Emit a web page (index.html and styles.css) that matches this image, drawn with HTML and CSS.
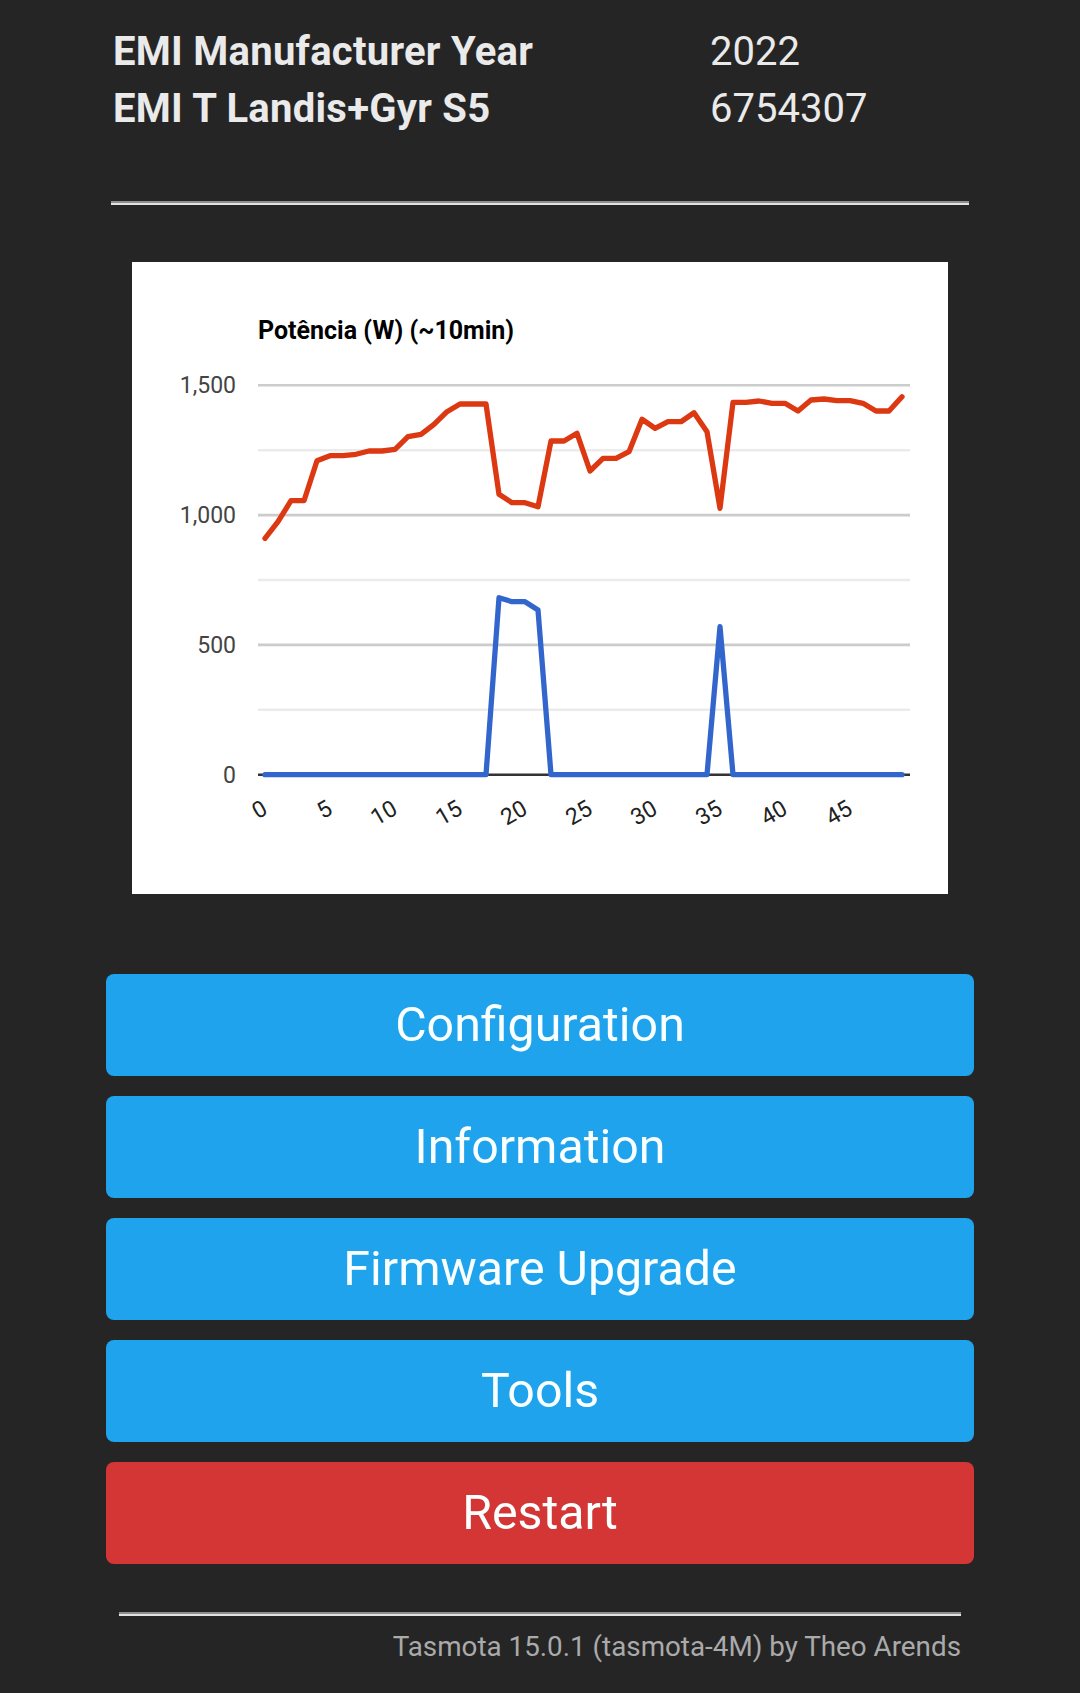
FILE: index.html
```html
<!DOCTYPE html>
<html lang="en">
<head>
<meta charset="utf-8">
<title>Tasmota</title>
<link rel="stylesheet" href="styles.css">
</head>
<body>
<div class="page">
  <div class="sensors">
    <div class="name">EMI Manufacturer Year</div><div class="val">2022</div>
    <div class="name">EMI T Landis+Gyr S5</div><div class="val">6754307</div>
  </div>
  <hr class="rule">
  <div class="chart">
    <svg width="816" height="632" viewBox="0 0 816 632" xmlns="http://www.w3.org/2000/svg">
      <text class="title" x="126" y="77">Potência (W) (~10min)</text>
      <g class="minor">
        <line x1="126" x2="778" y1="188.2" y2="188.2"/>
        <line x1="126" x2="778" y1="318" y2="318"/>
        <line x1="126" x2="778" y1="447.8" y2="447.8"/>
      </g>
      <g class="major">
        <line x1="126" x2="778" y1="123.3" y2="123.3"/>
        <line x1="126" x2="778" y1="253.1" y2="253.1"/>
        <line x1="126" x2="778" y1="382.9" y2="382.9"/>
      </g>
      <line class="base" x1="126" x2="778" y1="512.7" y2="512.7"/>
      <g class="ylab">
        <text x="104" y="131.3">1,500</text>
        <text x="104" y="261.1">1,000</text>
        <text x="104" y="390.9">500</text>
        <text x="104" y="520.7">0</text>
      </g>
      <g class="xlab">
        <text x="137" y="551" transform="rotate(-30 137 551)">0</text>
        <text x="202" y="551" transform="rotate(-30 202 551)">5</text>
        <text x="267" y="551" transform="rotate(-30 267 551)">10</text>
        <text x="332" y="551" transform="rotate(-30 332 551)">15</text>
        <text x="397" y="551" transform="rotate(-30 397 551)">20</text>
        <text x="462" y="551" transform="rotate(-30 462 551)">25</text>
        <text x="527" y="551" transform="rotate(-30 527 551)">30</text>
        <text x="592" y="551" transform="rotate(-30 592 551)">35</text>
        <text x="657" y="551" transform="rotate(-30 657 551)">40</text>
        <text x="722" y="551" transform="rotate(-30 722 551)">45</text>
      </g>
      <polyline class="s-red" points="133,276.3 146,259.7 159,238.7 172,238.7 185,198.7 198,193.7 211,193.7 224,192.3 237,189 250,189 263,187.3 276,174.7 289,172.3 302,162.3 315,149.7 328,142 341,142 354,142 367,232.3 380,240.7 393,240.7 406,244.7 419,179 432,179 445,171.3 458,209 471,196.3 484,196.3 497,189.7 510,157.3 523,166.3 536,159.7 549,159.7 562,150.7 575,169.7 588,246.3 601,140.3 614,140.3 627,139 640,141.3 653,141.3 666,149 679,138 692,137 705,138.7 718,138.7 731,141.3 744,149 757,149 770,134.7"/>
      <polyline class="s-blue" points="133,512.7 354,512.7 367,335.7 380,339.7 393,339.7 406,348 419,512.7 575,512.7 588,364.7 601,512.7 770,512.7"/>
    </svg>
  </div>
  <div class="buttons">
    <button class="btn">Configuration</button>
    <button class="btn">Information</button>
    <button class="btn">Firmware Upgrade</button>
    <button class="btn">Tools</button>
    <button class="btn btn-red">Restart</button>
  </div>
  <div class="footer">
    <hr class="rule rule-foot">
    <div class="credit">Tasmota 15.0.1 (tasmota-4M) by Theo Arends</div>
  </div>
</div>
</body>
</html>
```
FILE: styles.css
```css
html, body {
  margin: 0;
  padding: 0;
  background: #252525;
}
body {
  font-family: Roboto, "Noto Sans", "Liberation Sans", sans-serif;
  color: #eaeaea;
}
.page {
  width: 868px;
  margin: 0 auto;
  padding-top: 23px;
}
.sensors {
  display: grid;
  grid-template-columns: 597px auto;
  padding-left: 7px;
  font-size: 40px;
  line-height: 57px;
}
.sensors .name {
  font-weight: 700;
  letter-spacing: 0.27px;
}
.sensors .val {
  font-weight: 400;
}
.rule {
  height: 0;
  margin: 64px 5px 0;
  border: 0;
  border-top: 2px solid #8e8e8e;
  border-bottom: 2px solid #e2e2e2;
}
.chart {
  width: 816px;
  height: 632px;
  margin: 57px auto 0;
  background: #fff;
}
.chart svg {
  display: block;
  font-family: Roboto, "Liberation Sans", sans-serif;
}
.title {
  font-size: 25px;
  font-weight: 700;
  fill: #000;
}
.minor line {
  stroke: #ebebeb;
  stroke-width: 2.6;
}
.major line {
  stroke: #cccccc;
  stroke-width: 2.6;
}
.base {
  stroke: #333;
  stroke-width: 2.6;
}
.ylab text {
  font-size: 23px;
  fill: #444;
  text-anchor: end;
}
.xlab text {
  font-size: 23px;
  fill: #222;
  text-anchor: end;
}
.s-red, .s-blue {
  fill: none;
  stroke-width: 5.3;
  stroke-linejoin: round;
  stroke-linecap: round;
}
.s-red { stroke: #dc3912; }
.s-blue { stroke: #3366cc; }
.buttons {
  display: flex;
  flex-direction: column;
  gap: 20px;
  margin-top: 80px;
}
.btn {
  display: flex;
  align-items: center;
  justify-content: center;
  width: 100%;
  height: 102px;
  padding: 0;
  border: 0;
  border-radius: 8px;
  background: #1fa3ec;
  color: #faffff;
  font-family: Roboto, "Noto Sans", "Liberation Sans", sans-serif;
  font-size: 48.3px;
  line-height: 102px;
}
.btn-red {
  background: #d43535;
}
.footer {
  margin-top: 48px;
  text-align: right;
  padding: 0 13px;
}
.rule-foot {
  margin: 0;
}
.credit {
  margin-top: 14px;
  font-size: 27.8px;
  color: #aaa;
}
```
